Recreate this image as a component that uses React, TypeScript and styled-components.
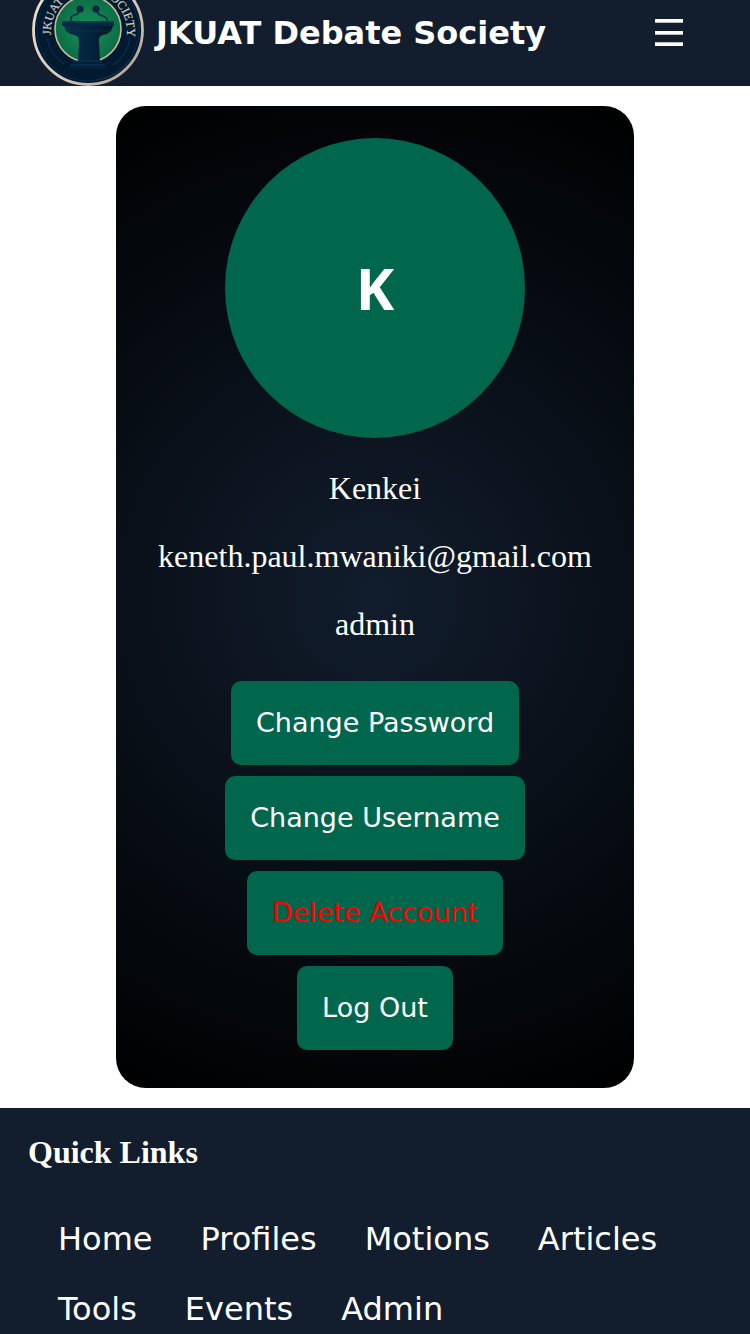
import React from "react";
import styled, { createGlobalStyle } from "styled-components";

const sans = `Verdana, "DejaVu Sans", sans-serif`;
const serif = `"Liberation Serif", "Times New Roman", serif`;

const GlobalStyle = createGlobalStyle`
  *, *::before, *::after { box-sizing: border-box; }
  body { margin: 0; background: #ffffff; font-family: ${serif}; }
`;

const Page = styled.div`
  display: flex;
  flex-direction: column;
  min-height: 100vh;
`;

const Header = styled.header`
  display: flex;
  align-items: flex-end;
  height: 86px;
  padding: 0 64px 0 32px;
  background: #121d2d;
  color: #ffffff;
  overflow: hidden;
`;

const Logo = styled.svg`
  flex: none;
  width: 112px;
  height: 112px;
`;

const Brand = styled.h1`
  flex: 1;
  margin: 0 0 31px 12px;
  font: bold 32px/44px ${sans};
  white-space: nowrap;
`;

const MenuButton = styled.button`
  display: flex;
  margin: 0 0 36px;
  padding: 0;
  border: 0;
  background: none;
  color: inherit;
`;

const Main = styled.main`
  display: flex;
  justify-content: center;
  padding: 20px;
`;

const Card = styled.section`
  display: flex;
  flex-direction: column;
  align-items: center;
  padding: 32px 42px 38px;
  border-radius: 30px;
  background: radial-gradient(circle, #111d2d, #000000);
  color: #ffffff;
`;

const Avatar = styled.div`
  display: flex;
  align-items: center;
  justify-content: center;
  width: 300px;
  height: 300px;
  margin-bottom: 32px;
  border-radius: 50%;
  background: #00674d;
  font: bold 58px/80px "Noto Sans", sans-serif;
`;

const Details = styled.div`
  display: flex;
  flex-direction: column;
  align-items: center;
  gap: 32px;
  margin-bottom: 39px;
`;

const Detail = styled.p`
  margin: 0;
  font-size: 32px;
  line-height: 36px;
`;

const Actions = styled.div`
  display: flex;
  flex-direction: column;
  align-items: center;
  gap: 11px;
`;

const ActionButton = styled.button<{ $danger?: boolean }>`
  padding: 24px 25px;
  border: 0;
  border-radius: 10px;
  background: #00674d;
  color: ${(p) => (p.$danger ? "#ff0000" : "#ffffff")};
  font: 27px/36px ${sans};
`;

const Footer = styled.footer`
  flex: 1;
  padding: 26px 28px 0;
  background: #121d2d;
  color: #ffffff;
`;

const FooterTitle = styled.h2`
  margin: 0 0 34px;
  font: bold 32px/36px ${serif};
`;

const Links = styled.ul`
  display: flex;
  flex-wrap: wrap;
  gap: 0 48px;
  margin: 0;
  padding: 0 30px;
  list-style: none;
`;

const FooterLink = styled.a`
  color: inherit;
  font: 32px/70px ${sans};
  text-decoration: none;
`;

const links = ["Home", "Profiles", "Motions", "Articles", "Tools", "Events", "Admin"];

function SocietyLogo() {
  return (
    <Logo viewBox="0 0 112 112" aria-label="JKUAT Debate Society logo">
      <defs>
        <linearGradient id="rim" x1="0" y1="0" x2="1" y2="1">
          <stop offset="0" stopColor="#eee4d3" />
          <stop offset="0.6" stopColor="#d5c9bb" />
          <stop offset="1" stopColor="#a79a8b" />
        </linearGradient>
        <radialGradient id="green">
          <stop offset="0" stopColor="#1a9159" />
          <stop offset="1" stopColor="#0c6c45" />
        </radialGradient>
        <linearGradient id="wood" x1="0" x2="1">
          <stop offset="0" stopColor="#0a2f4d" />
          <stop offset="0.5" stopColor="#04243d" />
          <stop offset="1" stopColor="#021729" />
        </linearGradient>
        <path id="ring" d="M19 61 V57 A38 38 0 0 1 95 57 V63" />
      </defs>
      <circle cx="56" cy="56" r="54.5" fill="#021a30" stroke="url(#rim)" strokeWidth="2.8" />
      <circle cx="56" cy="56" r="51" fill="none" stroke="#082a46" />
      <circle cx="56" cy="55" r="33" fill="url(#green)" stroke="#c4ba99" strokeWidth="1.6" />
      <g fill="#d5cab8" stroke="#d5cab8" strokeWidth="0.2" fontFamily={serif} fontSize="12">
        <text><textPath href="#ring">JKUAT</textPath></text>
        <text textAnchor="end"><textPath href="#ring" startOffset="100%">SOCIETY</textPath></text>
      </g>
      <g fill="none" stroke="#123350" strokeLinecap="round">
        <path d="M15 65 Q19 82 32 90" />
        <path d="M98 64 Q95 83 81 91" />
        <path d="M65 106 Q87 103 98 86" />
      </g>
      <g fill="none" stroke="#07304a" strokeWidth="1.6" strokeLinecap="round">
        <path d="M47 37 Q46 41 42 41 Q38 42 39 48" />
        <path d="M65 37 Q66 41 71 42 Q75 43 76 48" />
      </g>
      <circle cx="48" cy="35" r="3.6" fill="#052b43" />
      <circle cx="64" cy="35" r="3.6" fill="#052b43" />
      <path d="M32 52 H81 L79 57 Q76 60 71 61 Q67 62 67 66 L68 88 H46 L47 67 Q47 62 42 61 Q37 60 34 57Z" fill="url(#wood)" />
      <rect x="30" y="47" width="52" height="5" rx="1" fill="#052943" />
      <path d="M30 48 H82" stroke="#124362" />
      <path d="M34 57 H79" stroke="#0b3653" strokeWidth="0.7" />
      <path d="M41 87 H70 V90 L73 91 V95 H38 V91 L41 90Z" fill="#042039" />
      <path d="M41 87 H70 M38 91 H73" stroke="#123e5c" strokeWidth="0.8" />
    </Logo>
  );
}

export default function App() {
  return (
    <>
      <GlobalStyle />
      <Page>
        <Header>
          <SocietyLogo />
          <Brand>JKUAT Debate Society</Brand>
          <MenuButton aria-label="Menu">
            <svg width="32" height="32" viewBox="0 0 32 32" fill="currentColor" aria-hidden="true">
              <rect x="1" y="1" width="28" height="3.7" />
              <rect x="1" y="13" width="28" height="3.7" />
              <rect x="1" y="24.3" width="28" height="3.7" />
            </svg>
          </MenuButton>
        </Header>
        <Main>
          <Card>
            <Avatar>K</Avatar>
            <Details>
              <Detail>Kenkei</Detail>
              <Detail>keneth.paul.mwaniki@gmail.com</Detail>
              <Detail>admin</Detail>
            </Details>
            <Actions>
              <ActionButton>Change Password</ActionButton>
              <ActionButton>Change Username</ActionButton>
              <ActionButton $danger>Delete Account</ActionButton>
              <ActionButton>Log Out</ActionButton>
            </Actions>
          </Card>
        </Main>
        <Footer>
          <FooterTitle>Quick Links</FooterTitle>
          <Links>
            {links.map((name) => (
              <li key={name}>
                <FooterLink href={`#${name.toLowerCase()}`}>{name}</FooterLink>
              </li>
            ))}
          </Links>
        </Footer>
      </Page>
    </>
  );
}
